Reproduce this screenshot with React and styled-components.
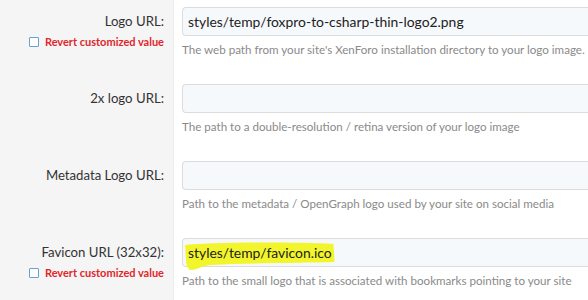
import React from "react";
import styled, { createGlobalStyle } from "styled-components";

const GlobalStyle = createGlobalStyle`
  html, body {
    margin: 0;
    padding: 0;
    background: #fff;
    overflow: hidden;
  }
  body {
    font-family: Lato, "Noto Sans", sans-serif;
  }
`;

const rows = [
  {
    label: "Logo URL:",
    value: "styles/temp/foxpro-to-csharp-thin-logo2.png",
    hint: "The web path from your site's XenForo installation directory to your logo image.",
    revert: true,
  },
  {
    label: "2x logo URL:",
    value: "",
    hint: "The path to a double-resolution / retina version of your logo image",
  },
  {
    label: "Metadata Logo URL:",
    value: "",
    hint: "Path to the metadata / OpenGraph logo used by your site on social media",
  },
  {
    label: "Favicon URL (32x32):",
    value: "styles/temp/favicon.ico",
    hint: "Path to the small logo that is associated with bookmarks pointing to your site",
    revert: true,
    marked: true,
  },
];

export default function App() {
  return (
    <>
      <GlobalStyle />
      <Form>
        {rows.map((row) => (
          <Row key={row.label}>
            <LabelCell>
              <Label>{row.label}</Label>
              {row.revert && (
                <Revert>
                  <Box />
                  <span>Revert customized value</span>
                </Revert>
              )}
            </LabelCell>
            <FieldCell>
              <Input>
                {row.marked ? (
                  <Marked>
                    <Marker viewBox="0 0 140 30" preserveAspectRatio="none">
                      <path
                        d="M1 4 C30 1 100 1 138 3 L139 21 C110 22 60 22 25 24 C15 25 12 29 7 29 C4 29 3 26 2 22 Z"
                        fill="#f2f52b"
                      />
                    </Marker>
                    <MarkedText>{row.value}</MarkedText>
                  </Marked>
                ) : (
                  row.value
                )}
              </Input>
              <Hint>{row.hint}</Hint>
            </FieldCell>
          </Row>
        ))}
      </Form>
    </>
  );
}

const Form = styled.div`
  display: flex;
  flex-direction: column;
  width: 588px;
  height: 300px;
  overflow: hidden;
`;

const Row = styled.div`
  display: grid;
  grid-template-columns: 174px 1fr;
  height: 77px;
  flex-shrink: 0;
`;

const LabelCell = styled.div`
  background: #f5f5f5;
  border-right: 1px solid #ececec;
  display: flex;
  flex-direction: column;
  align-items: flex-end;
  padding: 12px 9px 0 0;
`;

const Label = styled.div`
  font-size: 13.2px;
  color: #333;
  line-height: 18px;
`;

const Revert = styled.div`
  display: flex;
  align-items: center;
  gap: 6px;
  margin-top: 5px;
  font-size: 11px;
  font-weight: bold;
  color: #e0262b;
  line-height: 14px;
`;

const Box = styled.span`
  width: 8px;
  height: 8px;
  border: 1px solid #6a9fd6;
  border-radius: 1px;
  background: #fff;
`;

const FieldCell = styled.div`
  display: flex;
  flex-direction: column;
  padding: 7px 0 0 8px;
  min-width: 0;
`;

const Input = styled.div`
  height: 29px;
  width: 420px;
  box-sizing: border-box;
  border: 1px solid #dcdcdc;
  border-right: none;
  border-radius: 4px 0 0 4px;
  background: #f6f9fc;
  padding: 0 5px;
  display: flex;
  align-items: center;
  font-size: 13.9px;
  color: #222;
  white-space: nowrap;
`;

const Marked = styled.span`
  position: relative;
  display: inline-block;
`;

const Marker = styled.svg`
  position: absolute;
  left: -4px;
  top: -3px;
  width: calc(100% + 8px);
  height: 30px;
`;

const MarkedText = styled.span`
  position: relative;
`;

const Hint = styled.div`
  margin-top: 6px;
  font-size: 11.6px;
  color: #8a8a8a;
  white-space: nowrap;
  line-height: 16px;
`;
